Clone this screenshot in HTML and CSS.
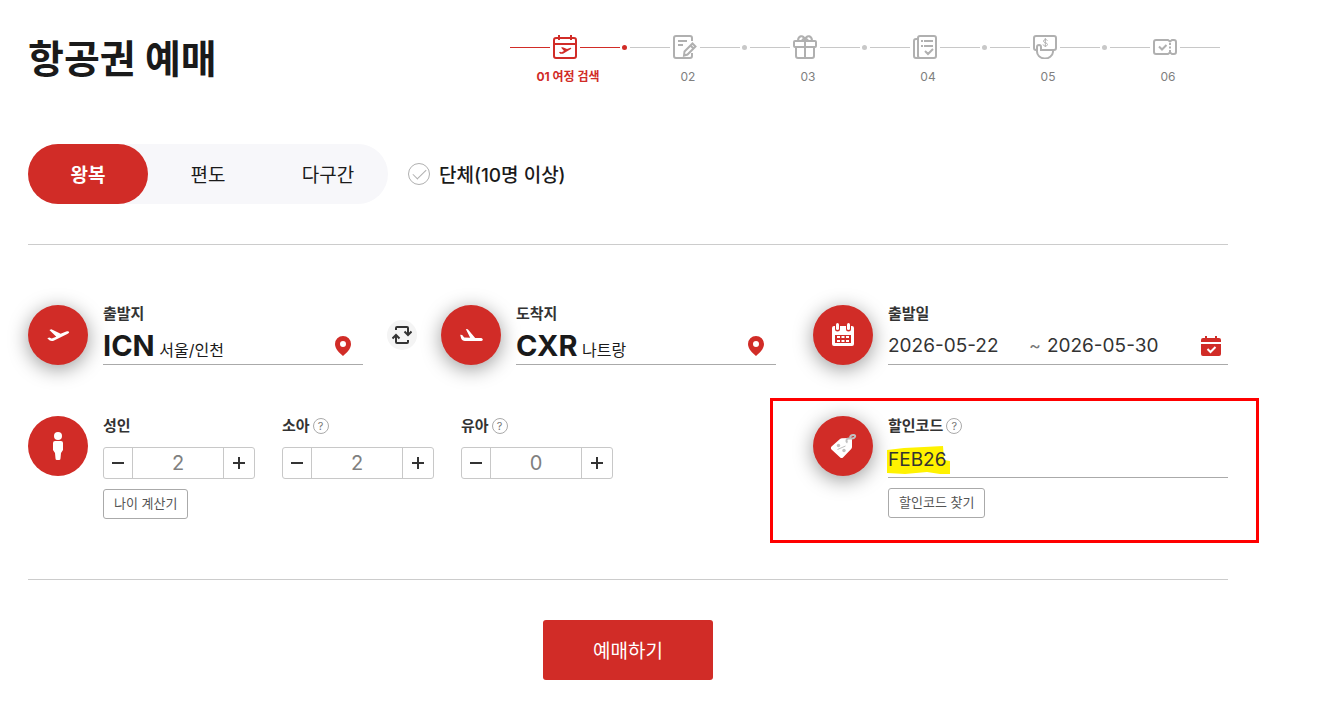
FILE: index.html
```html
<!DOCTYPE html>
<html lang="ko">
<head>
  <meta charset="UTF-8" />
  <meta name="viewport" content="width=device-width, initial-scale=1.0"/>
  <title>항공권 예매</title>
  <link rel="stylesheet" href="styles.css">
</head>
<body>
  <main class="container">
    <header class="header">
      <h1>항공권 예매</h1>

      <!-- Booking steps -->
      <ol class="steps">
        <li class="step active">
          <div class="track">
            <svg viewBox="0 0 24 24"><rect x="1" y="3" width="22" height="20" rx="2"/><path d="M1 9h22M6 0v5M18 0v5"/><path class="solid" d="M8 12.500l1.800-.3 4.200 1.800 3.500-1.200c1 0 1 1 0 1.400L10 18.700H7.200L6 17.200l1-.4 1.500.5 2.500-1.300z"/></svg>
            <i class="dot"></i>
          </div>
          <span class="step-name">01 여정 검색</span>
        </li>
        <li class="step">
          <div class="track">
            <svg viewBox="0 0 24 24"><path d="M19 6V3a2 2 0 0 0-2-2H3a2 2 0 0 0-2 2v18a2 2 0 0 0 2 2h14a2 2 0 0 0 2-2v-3M5 6h9M5 10h5"/><path d="M11.500 16.500l8-8 3 3-8 8-3.500 1zM17.500 10.500l3 3"/></svg>
            <i class="dot"></i>
          </div>
          <span class="step-name">02</span>
        </li>
        <li class="step">
          <div class="track">
            <svg viewBox="0 0 24 24"><rect x="1" y="6" width="22" height="6" rx="1"/><path d="M3 12v9a2 2 0 0 0 2 2h14a2 2 0 0 0 2-2v-9M12 6v17M5 6c0-5 5-7 7-1.500C14-1 19 1 19 6M9 6c0-1 2-3 3-3s3 2 3 3"/></svg>
            <i class="dot"></i>
          </div>
          <span class="step-name">03</span>
        </li>
        <li class="step">
          <div class="track">
            <svg viewBox="0 0 24 24"><rect x="5" y="1" width="18" height="22" rx="2"/><path d="M5 4H3a2 2 0 0 0-2 2v15a2 2 0 0 0 2 2h4M11 6h9M11 11h9M8 6h2M8 11h2M12 16l3 3 5-5"/></svg>
            <i class="dot"></i>
          </div>
          <span class="step-name">04</span>
        </li>
        <li class="step">
          <div class="track">
            <svg viewBox="0 0 24 24"><path d="M4 15H3a2 2 0 0 1-2-2V3a2 2 0 0 1 2-2h18a2 2 0 0 1 2 2v10a2 2 0 0 1-2 2H8v-3a2 2 0 0 0-4 0v4a8 7 0 0 0 16 1v-2"/><path class="thin" d="M14.500 5.500c-1-1.500-4.500-1-4 1 .3 1.500 4 1 4 3s-4 2-4.500 0M12.300 3v9"/></svg>
            <i class="dot"></i>
          </div>
          <span class="step-name">05</span>
        </li>
        <li class="step">
          <div class="track">
            <svg viewBox="0 0 24 24"><path d="M3 5h12l2 1.500L19 5h2a2 2 0 0 1 2 2v10a2 2 0 0 1-2 2h-2l-2-1.500-2 1.500H3a2 2 0 0 1-2-2V7a2 2 0 0 1 2-2zM6 11.500l3 3 4.500-4.500"/><path d="M17 8v9" stroke-dasharray="2 1.500"/></svg>
          </div>
          <span class="step-name">06</span>
        </li>
      </ol>
    </header>

    <form class="booking">
      <!-- Trip type -->
      <div class="trip">
        <div class="tabs">
          <button type="button" class="tab active">왕복</button>
          <button type="button" class="tab">편도</button>
          <button type="button" class="tab">다구간</button>
        </div>
        <label class="group"><input type="checkbox"><span>단체(10명 이상)</span></label>
      </div>

      <div class="fields">
        <!-- Route -->
        <div class="route">
          <div class="field">
            <span class="badge">
              <svg viewBox="0 0 24 24"><path d="M1.300 15.300l2-.8 2.400 1 4.600-1.700L3.400 7l2-.8 9.200 4.600 5.600-2.300c1.400-.5 2.600-.4 2.900.4.200.7-.6 1.500-1.800 2L7.600 17.700c-1.500.5-3 .3-4.200-.4z"/></svg>
            </span>
            <div class="field-body">
              <span class="label">출발지</span>
              <button type="button" class="place">
                <span><strong>ICN</strong> 서울/인천</span>
                <svg class="pin" viewBox="0 0 16 20"><path d="M8 0a8 8 0 0 0-8 8c0 5 4.500 9 8 12 3.500-3 8-7 8-12a8 8 0 0 0-8-8zm0 5a3 3 0 1 1 0 6 3 3 0 0 1 0-6z"/></svg>
              </button>
            </div>
          </div>
          <button type="button" class="swap" aria-label="출발지와 도착지 바꾸기">
            <svg viewBox="0 0 20 20"><path d="M4 5V3a1 1 0 0 1 1-1h10a1 1 0 0 1 1 1v6M16 15v2a1 1 0 0 1-1 1H5a1 1 0 0 1-1-1v-6M12.500 6.500L16 10l3.500-3.500M.5 13.500L4 10l3.500 3.500"/></svg>
          </button>
          <div class="field">
            <span class="badge">
              <svg viewBox="0 0 24 24"><path d="M1.200 11.700l2 .2 2 2.600 6 .3-4.400-8.800 2 .3 7.400 8.600h5c1.600 0 2.600.6 2.600 1.500s-1 1.600-2.600 1.600H6c-2 0-3.200-.8-3.800-2.400z"/></svg>
            </span>
            <div class="field-body">
              <span class="label">도착지</span>
              <button type="button" class="place">
                <span><strong>CXR</strong> 나트랑</span>
                <svg class="pin" viewBox="0 0 16 20"><path d="M8 0a8 8 0 0 0-8 8c0 5 4.500 9 8 12 3.500-3 8-7 8-12a8 8 0 0 0-8-8zm0 5a3 3 0 1 1 0 6 3 3 0 0 1 0-6z"/></svg>
              </button>
            </div>
          </div>
        </div>

        <!-- Dates -->
        <div class="field">
          <span class="badge">
            <svg viewBox="0 0 24 24"><path fill-rule="evenodd" d="M3 3h1v3a2.500 2.500 0 0 0 5 0V3h6v3a2.500 2.500 0 0 0 5 0V3h1a2 2 0 0 1 2 2v16a2 2 0 0 1-2 2H3a2 2 0 0 1-2-2V5a2 2 0 0 1 2-2zm1 9v8h16v-8z"/><rect x="5" y="0" width="3" height="7" rx="1.500"/><rect x="16" y="0" width="3" height="7" rx="1.500"/><path d="M6 13h3v2H6zM10.500 13h3v2h-3zM15 13h3v2h-3zM6 17h3v2H6zM10.500 17h3v2h-3zM15 17h3v2h-3z"/></svg>
          </span>
          <div class="field-body">
            <label class="label" for="depart-date">출발일</label>
            <div class="dates">
              <input type="text" id="depart-date" value="2026-05-22">
              <span class="tilde">~</span>
              <input type="text" id="return-date" aria-label="귀국일" value="2026-05-30">
              <button type="button" class="calendar" aria-label="달력 열기">
                <svg viewBox="0 0 20 20"><path d="M2 2h2V0h2v2h8V0h2v2h2a2 2 0 0 1 2 2v2H0V4a2 2 0 0 1 2-2zM0 8h20v10a2 2 0 0 1-2 2H2a2 2 0 0 1-2-2z"/><path class="tick" d="M6.500 13l3 3 5-5"/></svg>
              </button>
            </div>
          </div>
        </div>

        <!-- Passengers -->
        <div class="field">
          <span class="badge flat">
            <svg viewBox="0 0 12 28"><circle cx="6" cy="4" r="4"/><path d="M3 9h6a2 2 0 0 1 2 2v7l-2 3-.5 5.500a1.500 1.500 0 0 1-1.500 1.500H5a1.500 1.500 0 0 1-1.500-1.500L3 21l-2-3v-7a2 2 0 0 1 2-2z"/></svg>
          </span>
          <div class="passengers">
            <div class="passenger">
              <label class="label" for="adult">성인</label>
              <div class="counter">
                <button type="button" class="minus" aria-label="성인 줄이기"></button>
                <input type="text" id="adult" value="2">
                <button type="button" class="plus" aria-label="성인 늘리기"></button>
              </div>
              <button type="button" class="small-btn">나이 계산기</button>
            </div>
            <div class="passenger">
              <div class="label"><label for="child">소아</label><button type="button" class="help">?</button></div>
              <div class="counter">
                <button type="button" class="minus" aria-label="소아 줄이기"></button>
                <input type="text" id="child" value="2">
                <button type="button" class="plus" aria-label="소아 늘리기"></button>
              </div>
            </div>
            <div class="passenger">
              <div class="label"><label for="infant">유아</label><button type="button" class="help">?</button></div>
              <div class="counter">
                <button type="button" class="minus" aria-label="유아 줄이기"></button>
                <input type="text" id="infant" value="0">
                <button type="button" class="plus" aria-label="유아 늘리기"></button>
              </div>
            </div>
          </div>
        </div>

        <!-- Discount code -->
        <div class="field discount">
          <span class="badge">
            <svg class="tag" viewBox="0 0 28 28"><path d="M2.500 14.500L11 7c.6-.6 1.300-.8 2-.8l8-.2c1.300 0 2 .7 2 2v7c0 .8-.3 1.400-.8 2L14 25.500c-.8.8-2 .8-2.800 0l-8.700-8c-.8-.8-.8-2.200 0-3z"/><path class="ring" d="M18.500 10.500c-2-1-1-4 1-4h3.500c2.500 0 4.500-3 2-3.500-2-.3-3.500.5-4 2.500"/><path class="percent" d="M8.500 17.500l8-3.500"/><circle class="hole" cx="9.500" cy="13.500" r="1.700"/><circle class="hole" cx="15" cy="18.500" r="1.700"/></svg>
          </span>
          <div class="field-body">
            <div class="label"><label for="code">할인코드</label><button type="button" class="help">?</button></div>
            <div class="code">
              <svg class="marker" viewBox="0 0 64 30"><path d="M0 4l17-2 20-1 19-1 1 14 6 1v13l-10 0-13-2-22 2-18-1z"/></svg>
              <input type="text" id="code" value="FEB26">
            </div>
            <button type="button" class="small-btn">할인코드 찾기</button>
          </div>
        </div>
      </div>

      <button type="submit" class="submit">예매하기</button>
    </form>
  </main>
</body>
</html>
```

FILE: styles.css
```css
* {
  box-sizing: border-box;
}

body {
  margin: 0;
  background: #fff;
  color: #1a1a1a;
  font-family: Inter, "Noto Sans CJK KR", sans-serif;
}

button,
input {
  margin: 0;
  padding: 0;
  border: 0;
  background: none;
  color: inherit;
  font-family: inherit;
}

button {
  cursor: pointer;
}

svg {
  display: block;
}

.container {
  max-width: 1256px;
  padding: 32px 28px;
}

.header {
  display: flex;
  justify-content: space-between;
  height: 112px;
}

.header h1 {
  margin: 0;
  font-size: 39px;
  line-height: 54px;
  font-weight: 700;
}

/* Steps */
.steps {
  display: flex;
  margin: 0 -2px 0 0;
  padding: 0;
  list-style: none;
  color: #b0b0b0;
}

.step {
  width: 120px;
}

.track {
  display: flex;
  align-items: center;
  height: 30px;
}

.track::before,
.track::after {
  content: "";
  order: 1;
  width: 40px;
  height: 1px;
  background: #c8c8c8;
}

.track::before {
  order: 0;
}

.track svg {
  width: 24px;
  height: 24px;
  margin: 0 3px;
  fill: none;
  stroke: currentColor;
  stroke-width: 2;
}

.track .solid {
  fill: currentColor;
  stroke: none;
}

.track .thin {
  stroke-width: 1;
}

.dot {
  order: 2;
  width: 5px;
  height: 5px;
  margin-left: 2px;
  border-radius: 50%;
  background: #c8c8c8;
}

.step-name {
  display: block;
  padding-right: 4px;
  color: #808080;
  font-size: 12px;
  line-height: 30px;
  text-align: center;
}

.step.active,
.active .step-name {
  color: #d12c27;
  font-weight: 700;
}

.active .dot,
.active .track::before,
.active .track::after {
  background: #d12c27;
}

/* Trip type */
.trip {
  display: flex;
  align-items: center;
  gap: 20px;
  padding-bottom: 40px;
  border-bottom: 1px solid #ccc;
}

.tabs {
  display: flex;
  border-radius: 30px;
  background: #f7f7fa;
}

.tab {
  width: 120px;
  height: 60px;
  padding-bottom: 2px;
  border-radius: 30px;
  font-size: 19px;
}

.tab.active {
  background: #d12c27;
  color: #fff;
  font-weight: 700;
}

.group {
  display: flex;
  align-items: center;
  gap: 9px;
  font-size: 19px;
  font-weight: 500;
}

.group span {
  padding-bottom: 2px;
}

.group input {
  display: flex;
  justify-content: center;
  width: 22px;
  height: 22px;
  border: 1px solid #b0b0b0;
  border-radius: 50%;
  appearance: none;
}

.group input::after {
  content: "";
  width: 12px;
  height: 6px;
  margin-top: 5px;
  border: solid #b0b0b0;
  border-width: 0 0 1px 1px;
  transform: rotate(-45deg);
}

/* Fields */
.fields {
  display: grid;
  grid-template-columns: 748fr 415fr;
  gap: 51px 37px;
  padding: 60px 0;
  border-bottom: 1px solid #ccc;
}

.route {
  display: flex;
  align-items: center;
  gap: 24px;
}

.route .field {
  flex: 1;
}

.field {
  display: flex;
  gap: 15px;
}

.field-body {
  flex: 1;
}

.badge {
  display: flex;
  align-items: center;
  justify-content: center;
  flex-shrink: 0;
  width: 60px;
  height: 60px;
  border-radius: 50%;
  background: #d12c27;
  box-shadow: 0 4px 20px rgba(0, 0, 0, 0.4);
}

.badge.flat {
  box-shadow: none;
}

.badge svg {
  width: 24px;
  height: 28px;
  fill: #fff;
}

.badge .tag {
  width: 28px;
}

.tag .ring,
.tag .percent {
  fill: none;
  stroke: #c0c0c0;
  stroke-width: 2;
}

.tag .percent {
  stroke-width: 1;
}

.tag .hole {
  fill: #c0c0c0;
}

.label {
  display: flex;
  align-items: center;
  gap: 3px;
  height: 18px;
  color: #333;
  font-size: 15px;
  line-height: 18px;
  font-weight: 700;
}

.help {
  width: 16px;
  height: 16px;
  border: 1px solid #aaa;
  border-radius: 50%;
  color: #777;
  font-size: 11px;
  line-height: 14px;
}

.place,
.dates {
  display: flex;
  align-items: center;
  justify-content: space-between;
  width: 100%;
  height: 42px;
  border-bottom: 1px solid #aaa;
}

.place {
  padding: 4px 12px 0 0;
  font-size: 16px;
}

.place strong {
  font-size: 29px;
  line-height: 36px;
}

.pin {
  width: 16px;
  height: 20px;
  fill: #d12c27;
}

.swap {
  display: flex;
  align-items: center;
  justify-content: center;
  width: 30px;
  height: 30px;
  border-radius: 50%;
  background: #f4f4f4;
}

.swap svg {
  width: 20px;
  height: 20px;
  fill: none;
  stroke: #333;
  stroke-width: 2;
}

.dates {
  padding: 4px 7px 0 0;
}

.dates input,
.code input {
  color: #333;
  font-size: 19px;
}

.dates input {
  width: 113px;
}

.tilde {
  margin: 0 6px 0 28px;
  color: #777;
  font-size: 18px;
}

.calendar {
  margin-left: auto;
}

.calendar svg {
  width: 20px;
  height: 20px;
  fill: #d12c27;
}

.calendar .tick {
  fill: none;
  stroke: #fff;
  stroke-width: 2;
}

/* Passengers */
.passengers {
  display: flex;
  gap: 27px;
}

.passenger .label,
.discount .label {
  height: 20px;
}

.counter {
  display: flex;
  width: 152px;
  height: 32px;
  margin-top: 11px;
  border: 1px solid #c8c8c8;
  border-radius: 3px;
}

.counter input {
  flex: 1;
  min-width: 0;
  border: solid #c8c8c8;
  border-width: 0 1px;
  color: #808080;
  font-size: 20px;
  text-align: center;
}

.counter button {
  display: grid;
  place-items: center;
  width: 30px;
}

.counter .minus {
  width: 28px;
}

.counter button::before,
.plus::after {
  content: "";
  grid-area: 1 / 1;
  width: 12px;
  height: 2px;
  background: #333;
}

.plus::after {
  transform: rotate(90deg);
}

.small-btn {
  height: 30px;
  margin-top: 10px;
  padding: 0 10px 3px;
  border: 1px solid #aaa;
  border-radius: 3px;
  color: #555;
  font-size: 13px;
}

/* Discount code */
.discount {
  position: relative;
}

.discount::after {
  content: "";
  position: absolute;
  top: -18px;
  right: -31px;
  left: -43px;
  height: 139px;
  border: 3px solid #f00;
  pointer-events: none;
}

.code {
  position: relative;
  height: 42px;
  border-bottom: 1px solid #aaa;
}

.marker {
  position: absolute;
  top: 10px;
  left: -1px;
  width: 64px;
  height: 30px;
  fill: #fff200;
}

.code input {
  position: relative;
  width: 100%;
  height: 46px;
}

.submit {
  display: block;
  width: 170px;
  height: 60px;
  margin: 40px auto 0;
  padding-bottom: 2px;
  border-radius: 3px;
  background: #d12c27;
  color: #fff;
  font-size: 19px;
}
```
